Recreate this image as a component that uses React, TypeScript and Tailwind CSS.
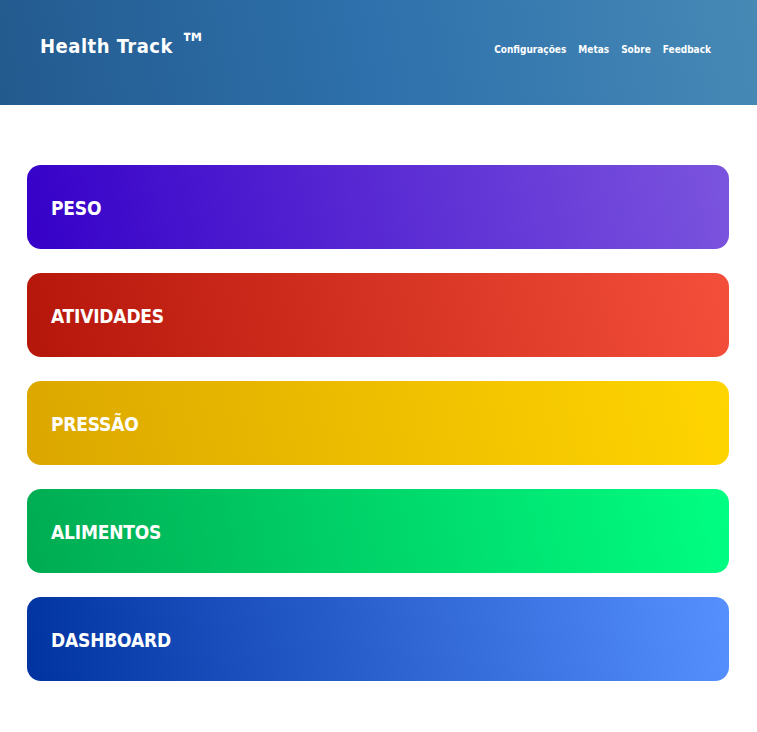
const cards = [
  { label: "PESO", bg: "bg-linear-[78deg] from-[#3600c8] to-[#7b54de]" },
  { label: "ATIVIDADES", bg: "bg-linear-[78deg] from-[#b5160a] to-[#f44f3b]" },
  { label: "PRESSÃO", bg: "bg-linear-[78deg] from-[#dba700] to-[#ffd500]" },
  { label: "ALIMENTOS", bg: "bg-linear-[78deg] from-[#00ab52] to-[#00ff82]" },
  { label: "DASHBOARD", bg: "bg-linear-[78deg] from-[#0033a0] to-[#5690ff]" },
];

const links = ["Configurações", "Metas", "Sobre", "Feedback"];

export default function App() {
  return (
    <div className="min-h-screen bg-white font-['DejaVu_Sans_Condensed','DejaVu_Sans',sans-serif]">
      <header className="h-[105px] bg-linear-[80deg] from-[#235a8e] via-[#2e71ac] to-[#4789b5] flex items-center justify-between pl-10 pr-[46px]">
        <h1 className="text-white font-bold text-[20px] tracking-[0.5px] -mt-[13px] flex items-start">
          Health Track<span className="text-[29px] leading-none ml-[7px] -mt-[1px] tracking-normal">™</span>
        </h1>
        <nav className="flex gap-3 text-white font-bold text-[10px] -mt-[7px]">
          {links.map((l) => (
            <a key={l} href="#">{l}</a>
          ))}
        </nav>
      </header>
      <main className="pt-[60px] pl-[27px] pr-[28px] flex flex-col gap-6">
        {cards.map((c) => (
          <div key={c.label} className={`h-[84px] rounded-[14px] flex items-center px-6 ${c.bg}`}>
            <span className="text-white font-bold text-[19px] tracking-[-0.2px] mt-[3px]">{c.label}</span>
          </div>
        ))}
      </main>
    </div>
  );
}
